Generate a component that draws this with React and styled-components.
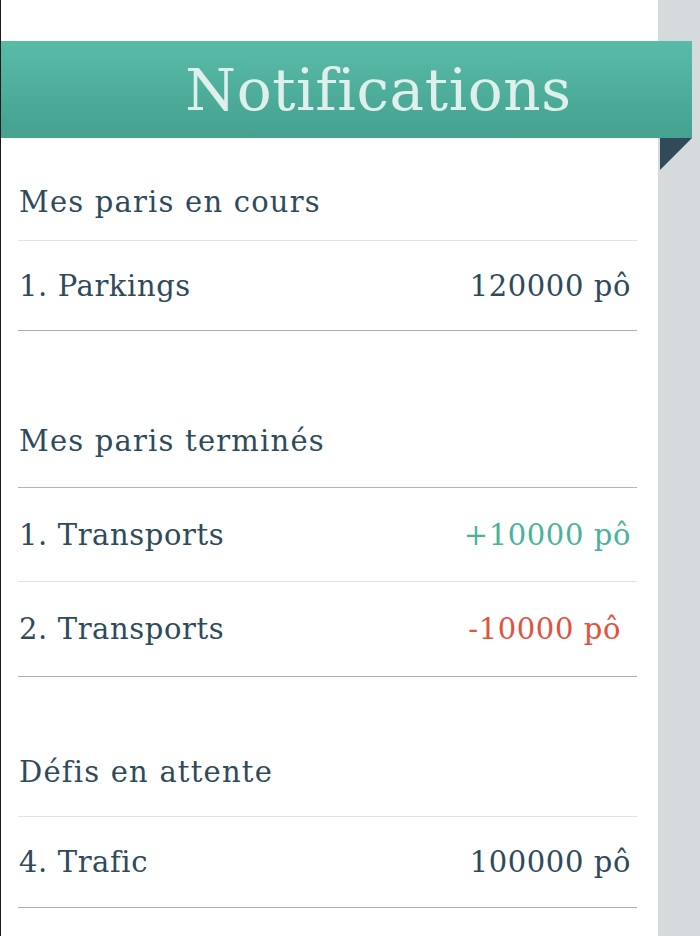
import React from "react";
import styled, { createGlobalStyle } from "styled-components";

const GlobalStyle = createGlobalStyle`
    html, body {
        margin: 0;
        padding: 0;
        background: #ffffff;
    }
    body {
        font-family: "DejaVu Serif", "Liberation Serif", serif;
        color: #2f4a5b;
    }
`;

const Page = styled.div`
    display: flex;
    width: 700px;
    min-height: 936px;
    overflow: hidden;
`;

const Panel = styled.div`
    width: 657px;
    border-left: 1px solid #1c1c1c;
    background: #ffffff;
    padding-top: 41px;
    display: flex;
    flex-direction: column;
`;

const Side = styled.div`
    flex: 1;
    background: #d5dadd;
`;

const Banner = styled.header`
    position: relative;
    z-index: 1;
    height: 97px;
    margin-right: -34px;
    background: linear-gradient(to bottom, #58bba8, #44a28f);
    display: flex;
    align-items: center;
    justify-content: center;

    &::after {
        content: "";
        position: absolute;
        right: 0;
        top: 100%;
        border-top: 32px solid #314a5a;
        border-right: 32px solid transparent;
    }
`;

const Title = styled.h1`
    margin: 0 0 0 64px;
    font-size: 58px;
    font-weight: normal;
    color: #dff0ec;
    letter-spacing: 0.6px;
`;

const List = styled.div`
    padding: 0 21px 0 17px;
`;

const Section = styled.section`
    margin-top: ${(p) => p.$top}px;
`;

const SectionTitle = styled.h2`
    margin: 0;
    height: 40px;
    line-height: 40px;
    padding: 0 0 ${(p) => p.$pad}px 1px;
    font-size: 29px;
    font-weight: normal;
    letter-spacing: 1.2px;
    border-bottom: 1px solid ${(p) => (p.$strong ? "#b4b4b4" : "#e3e3e3")};
`;

const Row = styled.div`
    display: flex;
    align-items: center;
    justify-content: space-between;
    height: ${(p) => p.$h || 90}px;
    padding: 0 6px 0 1px;
    border-bottom: 1px solid ${(p) => (p.$last ? "#aeaeae" : "#e3e3e3")};
    font-size: 29px;
    letter-spacing: 0.6px;
`;

const Label = styled.span``;

const Amount = styled.span`
    color: ${(p) =>
        p.$tone === "up" ? "#4ab29b" : p.$tone === "down" ? "#e2523d" : "#2f4a5b"};
    margin-right: ${(p) => (p.$tone === "down" ? 10 : 0)}px;
`;

const sections = [
    {
        title: "Mes paris en cours",
        top: 44,
        pad: 18,
        rows: [{ label: "1. Parkings", amount: "120000 pô", h: 89 }],
    },
    {
        title: "Mes paris terminés",
        top: 90,
        pad: 26,
        strong: true,
        rows: [
            { label: "1. Transports", amount: "+10000 pô", tone: "up", h: 93 },
            { label: "2. Transports", amount: "-10000 pô", tone: "down", h: 94 },
        ],
    },
    {
        title: "Défis en attente",
        top: 75,
        pad: 24,
        rows: [{ label: "4. Trafic", amount: "100000 pô", h: 90 }],
    },
];

export default () => {
    return (
        <Page>
            <GlobalStyle />
            <Panel>
                <Banner>
                    <Title>Notifications</Title>
                </Banner>
                <List>
                    {sections.map((s) => (
                        <Section key={s.title} $top={s.top}>
                            <SectionTitle $pad={s.pad} $strong={s.strong}>
                                {s.title}
                            </SectionTitle>
                            {s.rows.map((r, i) => (
                                <Row key={r.label} $h={r.h} $last={i === s.rows.length - 1}>
                                    <Label>{r.label}</Label>
                                    <Amount $tone={r.tone}>{r.amount}</Amount>
                                </Row>
                            ))}
                        </Section>
                    ))}
                </List>
            </Panel>
            <Side />
        </Page>
    );
};
